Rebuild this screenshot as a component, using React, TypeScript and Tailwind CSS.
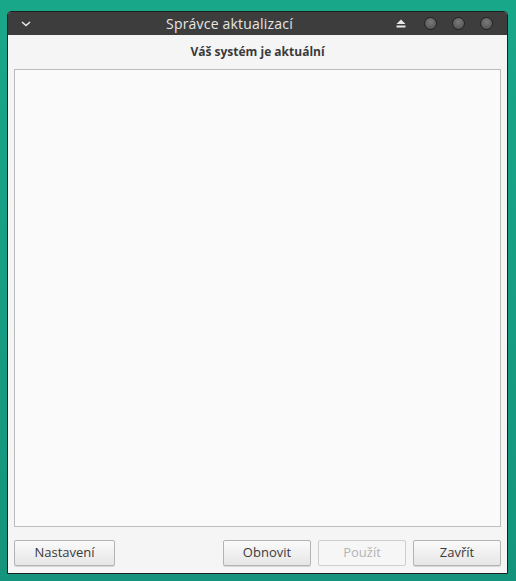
import React from "react";

const font = { fontFamily: '"Open Sans", "Noto Sans", sans-serif' };

function Circle() {
  return (
    <span className="w-[13px] h-[13px] rounded-full border-[1.5px] border-[#222222] bg-[radial-gradient(circle_at_50%_35%,#7a7a7a,#4c4c4c)]" />
  );
}

function Button({ label, wide, disabled }: { label: string; wide?: boolean; disabled?: boolean }) {
  return (
    <button
      className={
        (wide ? "w-[101px] " : "w-[88px] ") +
        "h-[26px] rounded-[2px] border text-[13px] " +
        (disabled
          ? "border-[#cfcfcf] bg-[#f6f6f6] text-[#b4b4b4]"
          : "border-[#b3b3b3] bg-gradient-to-b from-[#fafafa] to-[#e6e6e6] text-[#3a3a3a] shadow-[0_1px_0_#d8d8d8]")
      }
    >
      {label}
    </button>
  );
}

export default function App() {
  return (
    <div className="w-[516px] h-[581px] bg-gradient-to-b from-[#19a78a] to-[#14947c] pt-[11px] pl-[7px]" style={font}>
      <div className="w-[501px] h-[563px] flex flex-col rounded-t-[4px] border border-[#1c1f1e] bg-[#f5f5f6] overflow-hidden">
        {/* Title bar */}
        <div className="h-[23px] shrink-0 bg-[#3d3d3d] flex items-center px-[10px] relative">
          <svg width="12" height="8" viewBox="0 0 12 8" className="ml-[2px]">
            <path d="M2 2 L6 5.5 L10 2" stroke="#e8e8e8" strokeWidth="1.6" fill="none" />
          </svg>
          <div className="absolute inset-0 pr-[56px] flex items-center justify-center text-[14px] tracking-[0.2px] text-[#e6e6e6] pointer-events-none">
            Správce aktualizací
          </div>
          <div className="ml-auto flex items-center gap-[18px] mr-[4px]">
            <svg width="10" height="9" viewBox="0 0 10 9">
              <path d="M5 0.5 L9.5 5 L0.5 5 Z" fill="#e8e8e8" />
              <rect x="0.5" y="6.5" width="9" height="2" fill="#e8e8e8" />
            </svg>
            <div className="flex items-center gap-[15px]">
              <Circle />
              <Circle />
              <Circle />
            </div>
          </div>
        </div>

        {/* Status */}
        <div className="h-[34px] shrink-0 flex items-center justify-center text-[12px] font-bold text-[#3a3a3a] pb-[1px]">
          Váš systém je aktuální
        </div>

        {/* List */}
        <div className="mx-[6px] h-[458px] shrink-0 border border-[#bdbdbd] bg-[#fafafb]" />

        {/* Buttons */}
        <div className="flex items-center mt-[13px] mx-[6px] gap-[7px]">
          <Button label="Nastavení" wide />
          <div className="ml-auto flex gap-[7px]">
            <Button label="Obnovit" />
            <Button label="Použít" disabled />
            <Button label="Zavřít" />
          </div>
        </div>
      </div>
    </div>
  );
}
